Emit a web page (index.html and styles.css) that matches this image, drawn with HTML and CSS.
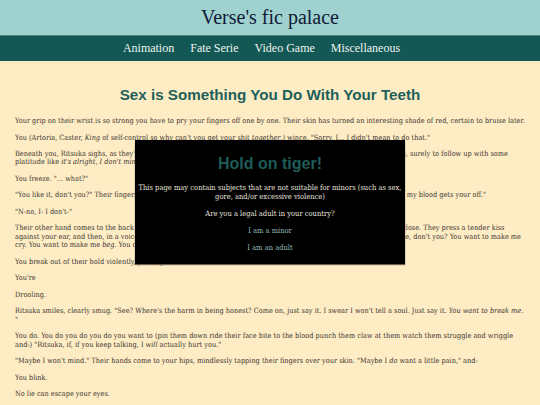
FILE: index.html
```html
<!DOCTYPE html>
<html lang="en">
<head>
<meta charset="utf-8">
<title>Sex is Something You Do With Your Teeth - Verse's fic palace</title>
<link rel="stylesheet" href="styles.css">
</head>
<body>
<header class="site-header">
  <h1 class="site-title">Verse's fic palace</h1>
</header>
<nav class="site-nav">
  <a href="#">Animation</a>
  <a href="#">Fate Serie</a>
  <a href="#">Video Game</a>
  <a href="#">Miscellaneous</a>
</nav>
<main class="story">
  <h2 class="story-title">Sex is Something You Do With Your Teeth</h2>
  <p>Your grip on their wrist is so strong you have to pry your fingers off one by one. Their skin has turned an interesting shade of red, certain to bruise later.</p>
  <p>You (Artoria, Caster, <i>King</i> of self-control so why can't you get your shit <i>together</i>,) wince. "Sorry. I... I didn't mean to do that."</p>
  <p>Beneath you, Ritsuka sighs, as they're wont to do, and you brace yourself as they open their pretty little mouth again, surely to follow up with some platitude like <i>it's alright, I don't mind</i>, or something equally as infuriating. Instead, all they say is "Oh, I know that."</p>
  <p>You freeze. "... what?"</p>
  <p>"You like it, don't you?" Their fingers trail along the bruises you left, feather-light. "Hurting me. Marking me. Tasting my blood gets your off."</p>
  <p>"N-no, I- I don't-"</p>
  <p>Their other hand comes to the back of your neck, gentle as anything, and with hardly any effort at all, they pull you close. They press a tender kiss against your ear, and then, in a voice softer than you've ever heard from them now: "You want to, you want to hurt me, don't you? You want to make me cry. You want to make me <i>beg</i>. You can't even say it out loud, can you? You can't even bring yourself to admit it."</p>
  <p>You break out of their hold violently, panting.</p>
  <p>You're</p>
  <p>Drooling.</p>
  <p>Ritsuka smiles, clearly smug. "See? Where's the harm in being honest? Come on, just say it. I swear I won't tell a soul. Just say it. <i>You want to break me.</i><br>"</p>
  <p>You do. You do you do you do you want to (pin them down ride their face bite to the blood punch them claw at them watch them struggle and wriggle and-) "Ritsuka, if, if you keep talking, I <i>will</i> actually hurt you."</p>
  <p>"Maybe I won't mind." Their hands come to your hips, mindlessly tapping their fingers over your skin. "Maybe I <i>do</i> want a little pain," and-</p>
  <p>You blink.</p>
  <p>No lie can escape your eyes.</p>
</main>
<div class="age-gate" role="dialog" aria-labelledby="gate-title">
  <h3 class="gate-title" id="gate-title">Hold on tiger!</h3>
  <p>This page may contain subjects that are not suitable for minors (such as sex, gore, and/or excessive violence)</p>
  <p>Are you a legal adult in your country?</p>
  <p><a href="#" class="gate-link">I am a minor</a></p>
  <p><a href="#" class="gate-link">I am an adult</a></p>
</div>
</body>
</html>
```
FILE: styles.css
```css
html, body {
  margin: 0;
  padding: 0;
}

body {
  background: #feecc4;
  color: #3a3530;
  font-family: "Liberation Serif", "DejaVu Serif", serif;
  height: 405px;
  overflow: hidden;
}

.site-header {
  background: #9fd1cf;
  height: 35px;
  display: flex;
  align-items: center;
  justify-content: center;
}

.site-title {
  margin: 0;
  font-weight: normal;
  font-size: 20px;
  color: #0f1a38;
}

.site-nav {
  background: #135855;
  height: 26px;
  border-top: 1px solid #4f8682;
  display: flex;
  align-items: center;
  justify-content: center;
  gap: 16px;
  padding-right: 17px;
  box-sizing: border-box;
}

.site-nav a {
  color: #eef3f0;
  text-decoration: none;
  font-size: 12px;
}

.story {
  padding: 0 15px;
}

.story-title {
  font-family: "Liberation Sans", Arial, sans-serif;
  font-weight: bold;
  font-size: 15.2px;
  color: #1d5f59;
  text-align: center;
  margin: 25px 0 14px;
}

.story p,
.age-gate p {
  font-family: "DejaVu Serif Condensed", "DejaVu Serif", serif;
  font-stretch: condensed;
}

.story p {
  font-size: 7.3px;
  line-height: 8.4px;
  margin: 0 0 8.1px;
}

.age-gate {
  position: absolute;
  left: 135px;
  top: 140px;
  width: 270px;
  height: 124px;
  background: #000;
  color: #e6e2dc;
  text-align: center;
  box-sizing: border-box;
  padding: 15px 3px 0;
  box-shadow: 0 1px 1px #6b6152;
}

.gate-title {
  font-family: "Liberation Sans", Arial, sans-serif;
  font-size: 16px;
  font-weight: bold;
  color: #1f5c58;
  margin: 0 0 10px;
}

.age-gate p {
  font-size: 7.5px;
  line-height: 9px;
  margin: 0 0 8px;
}

.gate-link {
  color: #94bcb9;
  text-decoration: none;
}
```
